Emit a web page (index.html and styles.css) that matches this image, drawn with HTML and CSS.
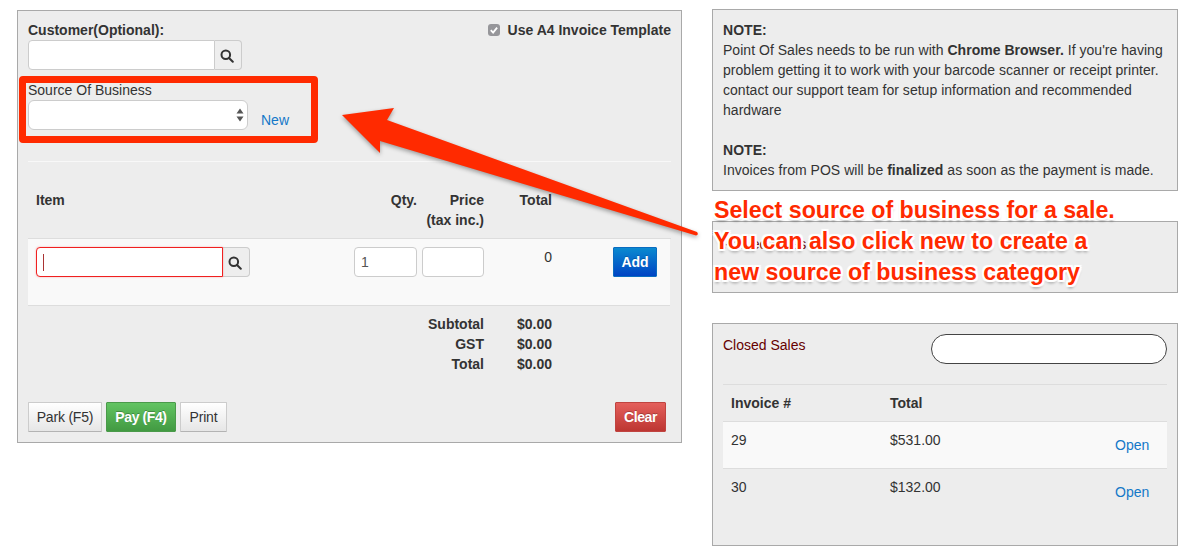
FILE: index.html
```html
<!DOCTYPE html>
<html lang="en">
<head>
<meta charset="utf-8">
<title>Point Of Sales</title>
<link rel="stylesheet" href="styles.css">
</head>
<body>
<div class="page">
  <main class="panel sale">
    <div class="top-row">
      <div class="customer">
        <label class="label-bold">Customer(Optional):</label>
        <div class="input-group">
          <input class="field grouped" type="text">
          <span class="search-btn"><svg class="search-icon" viewBox="0 0 14 14"><circle cx="5.8" cy="5.8" r="4.3"/><path d="M9 9l3.8 3.8"/></svg></span>
        </div>
      </div>
      <label class="template"><span class="check"><svg viewBox="0 0 12 12"><path d="M2.8 6.2l2.3 2.4 4-5"/></svg></span>Use A4 Invoice Template</label>
    </div>
    <div class="source">
      <div class="source-label">Source Of Business</div>
      <div class="source-row">
        <span class="select"><svg viewBox="0 0 8 14"><path d="M4 0.5l3.5 5h-7zM4 13.5l-3.5-5h7z"/></svg></span>
        <a class="link new-link">New</a>
      </div>
    </div>
    <hr class="rule">
    <div class="items-head">
      <div class="th item-th">Item</div>
      <div class="th num">Qty.</div>
      <div class="th num">Price<br>(tax inc.)</div>
      <div class="th num">Total</div>
    </div>
    <div class="items-row">
      <div class="input-group item-group">
        <span class="field grouped focused"><i class="caret"></i></span>
        <span class="search-btn"><svg class="search-icon" viewBox="0 0 14 14"><circle cx="5.8" cy="5.8" r="4.3"/><path d="M9 9l3.8 3.8"/></svg></span>
      </div>
      <input class="field qty" type="text" value="1">
      <input class="field price" type="text">
      <div class="line-total">0</div>
      <div class="add-cell"><button class="btn btn-add">Add</button></div>
    </div>
    <div class="totals">
      <div class="t-label">Subtotal</div><div class="t-val">$0.00</div>
      <div class="t-label">GST</div><div class="t-val">$0.00</div>
      <div class="t-label">Total</div><div class="t-val">$0.00</div>
    </div>
    <div class="actions">
      <button class="btn btn-plain btn-park">Park (F5)</button>
      <button class="btn btn-pay">Pay (F4)</button>
      <button class="btn btn-plain btn-print">Print</button>
      <button class="btn btn-clear">Clear</button>
    </div>
  </main>
  <aside class="side">
    <section class="panel notes">
      <b>NOTE:</b><br>
      Point Of Sales needs to be run with <b>Chrome Browser.</b> If you're having problem getting it to work with your barcode scanner or receipt printer. contact our support team for setup information and recommended hardware<br><br>
      <b>NOTE:</b><br>
      Invoices from POS will be <b>finalized</b> as soon as the payment is made.
    </section>
    <section class="panel parked">
      <div class="sales-title">Parked Sales</div>
    </section>
    <section class="panel closed">
      <div class="closed-head">
        <div class="sales-title">Closed Sales</div>
        <input class="pill" type="text">
      </div>
      <div class="sales-row sales-th"><b>Invoice #</b><b>Total</b></div>
      <div class="sales-row shaded"><span>29</span><span>$531.00</span><a class="link open">Open</a></div>
      <div class="sales-row"><span>30</span><span>$132.00</span><a class="link open">Open</a></div>
    </section>
  </aside>
</div>
<svg class="arrow" viewBox="0 0 1190 557" width="1190" height="557">
  <path class="arrow-shape" d="M342 115L394 108L387 120L697 232Q699 235 696 235.500L380 141L380 153Z"/>
</svg>
<div class="callout-box"></div>
<div class="callout-text">Select source of business for a sale.<br>You can also click new to create a<br>new source of business category</div>
</body>
</html>
```
FILE: styles.css
```css
* { box-sizing: border-box; }
html, body { margin: 0; padding: 0; height: 100%; overflow: hidden; background: #fff; }
body { font: 14px/20px "Liberation Sans", Arial, sans-serif; color: #333; position: relative; }
b { font-weight: 700; }
.page { display: flex; align-items: flex-start; gap: 30px; padding: 9px 0 0 17px; }
.panel { background: #ededed; border: 1px solid #a9a9a9; }
.sale { width: 665px; height: 433px; margin-top: 1px; padding: 9px 10px 10px; display: flex; flex-direction: column; }
.top-row { display: flex; justify-content: space-between; }
.label-bold { display: block; font-weight: 700; }
.input-group { display: flex; width: 214px; height: 30px; }
.field { display: block; height: 30px; background: #fff; border: 1px solid #ccc; border-radius: 4px; font: 14px "Liberation Sans", Arial, sans-serif; color: #555; padding: 0 6px; outline: 0; }
.grouped { flex: 1; min-width: 0; border-radius: 4px 0 0 4px; }
.search-btn { width: 27px; flex: none; display: flex; align-items: center; justify-content: center; padding: 1px 3px 0 0; background: #eee; border: 1px solid #ccc; border-left: 0; border-radius: 0 4px 4px 0; }
.search-icon { width: 14px; height: 14px; flex: none; fill: none; stroke: #333; stroke-width: 2; stroke-linecap: round; }
.template { font-weight: 700; display: flex; align-items: center; gap: 8px; height: 20px; }
.check { width: 12px; height: 12px; border-radius: 3px; background: #96969a; display: block; }
.check svg { display: block; width: 12px; height: 12px; fill: none; stroke: #fff; stroke-width: 1.800; }
.source { margin-top: 10px; }
.source-row { display: flex; align-items: flex-end; }
.select { width: 220px; height: 30px; background: #fff; border: 1px solid #ccc; border-radius: 6px; display: flex; align-items: center; justify-content: flex-end; padding-right: 3px; }
.select svg { width: 8px; height: 14px; fill: #555; }
.link { color: #1478c8; }
.new-link { margin: 0 0 0 13px; line-height: 20px; }
.rule { border: 0; border-top: 1px solid #f8f8f8; margin: 31px 0 0 0; }
.items-head, .items-row { display: grid; grid-template-columns: 318px 63px 67px 68px 1fr; padding-left: 8px; }
.items-head { margin-top: 28px; height: 49px; border-bottom: 1px solid #ddd; }
.th { font-weight: 700; }
.num { text-align: right; }
.items-row { background: #f9f9f9; height: 67px; padding-top: 8px; border-bottom: 1px solid #ddd; width: 642px; }
.item-group { height: 30px; }
.focused { border-color: #f02020; border-radius: 4px 0 0 4px; position: relative; box-shadow: 0 0 2px rgba(240, 32, 32, .35); }
.caret { position: absolute; left: 6px; top: 6px; width: 1px; height: 17px; background: #a33; }
.qty { width: 63px; }
.price { width: 62px; justify-self: end; }
.line-total { text-align: right; line-height: 20px; }
.add-cell { display: flex; justify-content: flex-start; padding-left: 61px; }
.btn { font: 14px "Liberation Sans", Arial, sans-serif; height: 30px; padding: 0; border-radius: 1px; border: 1px solid #ccc; cursor: pointer; }
.btn-add { width: 44px; color: #fff; font-weight: 700; background: linear-gradient(#0a8ad0, #0044c4); border-color: #0a6cc0; text-shadow: 0 -1px 0 rgba(0, 0, 0, .2); }
.totals { display: grid; grid-template-columns: 456px 68px; grid-auto-rows: 20px; margin-top: 8px; font-weight: 700; }
.t-label { text-align: right; }
.t-val { text-align: right; }
.actions { display: flex; gap: 4px; margin-top: auto; }
.btn-plain { color: #333; background: linear-gradient(#fff, #e6e6e6); border-color: #ccc #ccc #b3b3b3; letter-spacing: -.2px; }
.btn-park { width: 74px; }
.btn-print { width: 47px; }
.btn-pay { width: 70px; color: #fff; font-weight: 700; letter-spacing: -.4px; background: linear-gradient(#62c462, #429a42); border-color: #4a9a4a; text-shadow: 0 -1px 0 rgba(0, 0, 0, .25); }
.btn-clear { width: 51px; margin-left: auto; margin-right: 5px; color: #fff; font-weight: 700; letter-spacing: -.4px; background: linear-gradient(#e4605c, #bd3632); border-color: #c04440; text-shadow: 0 -1px 0 rgba(0, 0, 0, .25); }
.side { width: 466px; display: flex; flex-direction: column; gap: 30px; }
.notes { height: 182px; padding: 10px 10px 0; letter-spacing: .03px; }
.parked { height: 72px; padding: 11px 10px 0; }
.sales-title { color: #600; padding-top: 1px; }
.closed { height: 223px; padding: 10px 10px 0; }
.closed-head { display: flex; justify-content: space-between; height: 51px; border-bottom: 1px solid #ddd; }
.pill { width: 236px; height: 30px; background: #fff; border: 1px solid #444; border-radius: 15px; padding: 0 12px; outline: 0; }
.sales-row { display: grid; grid-template-columns: 159px 1fr 52px; padding-left: 8px; }
.sales-th { height: 37px; padding-top: 8px; border-bottom: 1px solid #ddd; }
.sales-row:not(.sales-th) { height: 47px; padding-top: 8px; }
.shaded { background: #f9f9f9; border-bottom: 1px solid #ddd; }
.open { padding-top: 5px; }
.arrow { position: absolute; left: 0; top: 0; pointer-events: none; }
.arrow-shape { fill: #ff2a00; filter: drop-shadow(0 2px 2px rgba(0, 0, 0, .35)); }
.callout-box { position: absolute; left: 19px; top: 76px; width: 299px; height: 67px; border: 7px solid #ff2a00; border-radius: 4px; }
.callout-text { position: absolute; left: 714px; top: 195px; font: 700 23.2px/31px "Liberation Sans", Arial, sans-serif; color: #ff2a00; white-space: nowrap; text-shadow: 2px 0 0 #fff, -2px 0 0 #fff, 0 2px 0 #fff, 0 -2px 0 #fff, 2px 2px 1px #fff, -2px -2px 1px #fff, 2px -2px 1px #fff, -2px 2px 1px #fff, 0 3px 3px rgba(0, 0, 0, .4); }
```
